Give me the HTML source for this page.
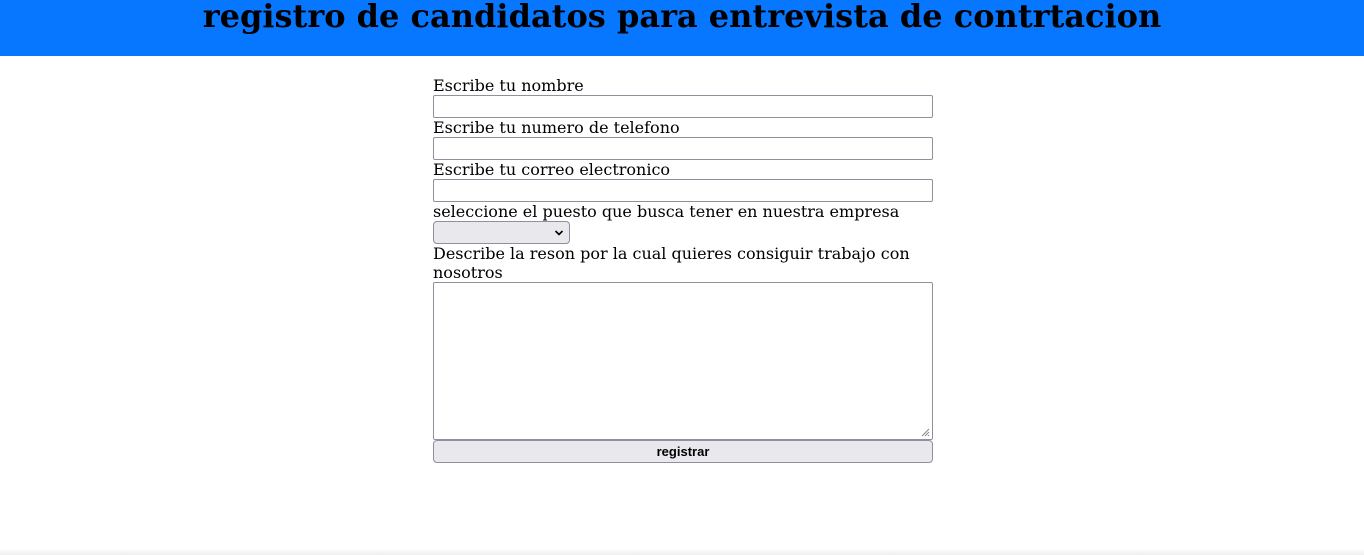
<!DOCTYPE html>
<html><head><style>
*{box-sizing:border-box;margin:0;padding:0}
body{width:1364px;height:555px;background:#fff;position:relative;overflow:hidden;font-family:"DejaVu Serif","Liberation Serif",serif;font-size:16px;color:#000}
.h{position:absolute;left:0;top:0;width:1364px;height:56px;background:#0677fe}
.h h1{position:absolute;left:0;width:100%;top:-6px;text-align:center;font-size:32px;font-weight:bold;line-height:44px;font-family:"DejaVu Serif",serif}
.l{position:absolute;left:433px;line-height:19px;width:500px}
.i{position:absolute;left:433px;width:500px;height:23px;border:1px solid #8f8f9d;border-radius:2px;background:#fff}
.s{position:absolute;left:433px;top:221px;width:137px;height:23px;border:1px solid #8f8f9d;border-radius:4px;background:#e9e9ed}
.b{position:absolute;left:433px;top:440px;width:500px;height:23px;border:1px solid #8f8f9d;border-radius:4px;background:#e9e9ed;font-family:"Liberation Sans",sans-serif;font-weight:bold;font-size:13px;text-align:center;line-height:21px}
.f{position:absolute;left:0;top:549px;width:1364px;height:6px;background:linear-gradient(#fff,#eee)}
</style></head><body>
<div class="h"><h1>registro de candidatos para entrevista de contrtacion</h1></div>
<div class="l" style="top:76px">Escribe tu nombre</div>
<div class="i" style="top:95px"></div>
<div class="l" style="top:118px">Escribe tu numero de telefono</div>
<div class="i" style="top:137px"></div>
<div class="l" style="top:160px">Escribe tu correo electronico</div>
<div class="i" style="top:179px"></div>
<div class="l" style="top:202px">seleccione el puesto que busca tener en nuestra empresa</div>
<div class="s"><svg style="position:absolute;left:120px;top:7px" width="10" height="8" viewBox="0 0 10 8"><path d="M1.5 2 L5 5.5 L8.5 2" fill="none" stroke="#000" stroke-width="1.6"/></svg></div>
<div class="l" style="top:244px">Describe la reson por la cual quieres consiguir trabajo con nosotros</div>
<div class="i" style="top:282px;height:158px"><svg style="position:absolute;right:2px;bottom:2px" width="10" height="10"><path d="M9 2L2 9M9 5L5 9M9 8L8 9" stroke="#888" stroke-width="1"/></svg></div>
<div class="b">registrar</div>
<div class="f"></div>
</body></html>
